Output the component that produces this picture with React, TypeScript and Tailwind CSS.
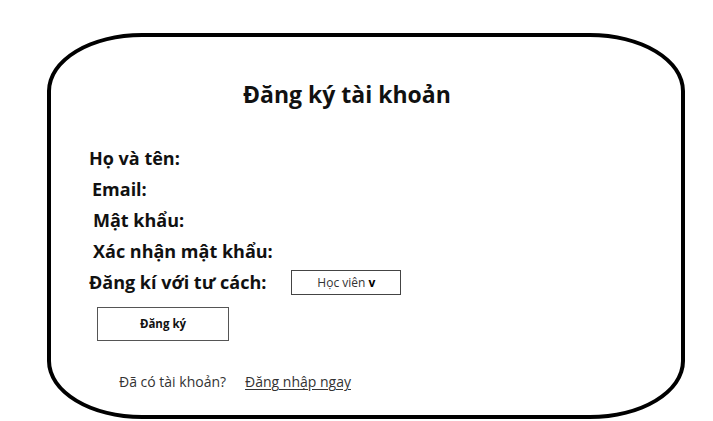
export default function App() {
  return (
    <div className="min-h-[421px] bg-white pl-[47px] pt-[33px] font-['Open_Sans',sans-serif] text-[#111]">
      <div className="flex h-[386px] w-[638px] flex-col rounded-[95px/58px] border-4 border-black">
        <h1 className="mt-[42px] pl-[192px] text-[23px] font-bold leading-[30px]">Đăng ký tài khoản</h1>

        <div className="mt-[34px] flex flex-col pl-[38px] text-[18px] font-bold leading-[31px]">
          <p>Họ và tên:</p>
          <p className="pl-[3px]">Email:</p>
          <p className="pl-[4px]">Mật khẩu:</p>
          <p className="pl-[4px]">Xác nhận mật khẩu:</p>
          <div className="flex items-center">
            <p>Đăng kí với tư cách:</p>
            <button
              type="button"
              className="ml-[25px] flex h-[25px] w-[110px] items-center justify-center border border-[#444] text-[12px] font-normal text-[#333]"
            >
              Học viên&nbsp;<span className="font-bold text-black">v</span>
            </button>
          </div>
        </div>

        <button
          type="button"
          className="ml-[46px] mt-[9px] h-[34px] w-[132px] border border-[#555] text-[11.5px] font-bold"
        >
          Đăng ký
        </button>

        <div className="ml-[68px] mt-[31px] flex items-center text-[14px] leading-[20px] text-[#333]">
          <span>Đã có tài khoản?</span>
          <a href="#" className="ml-[19px] underline underline-offset-2">
            Đăng nhập ngay
          </a>
        </div>
      </div>
    </div>
  );
}
